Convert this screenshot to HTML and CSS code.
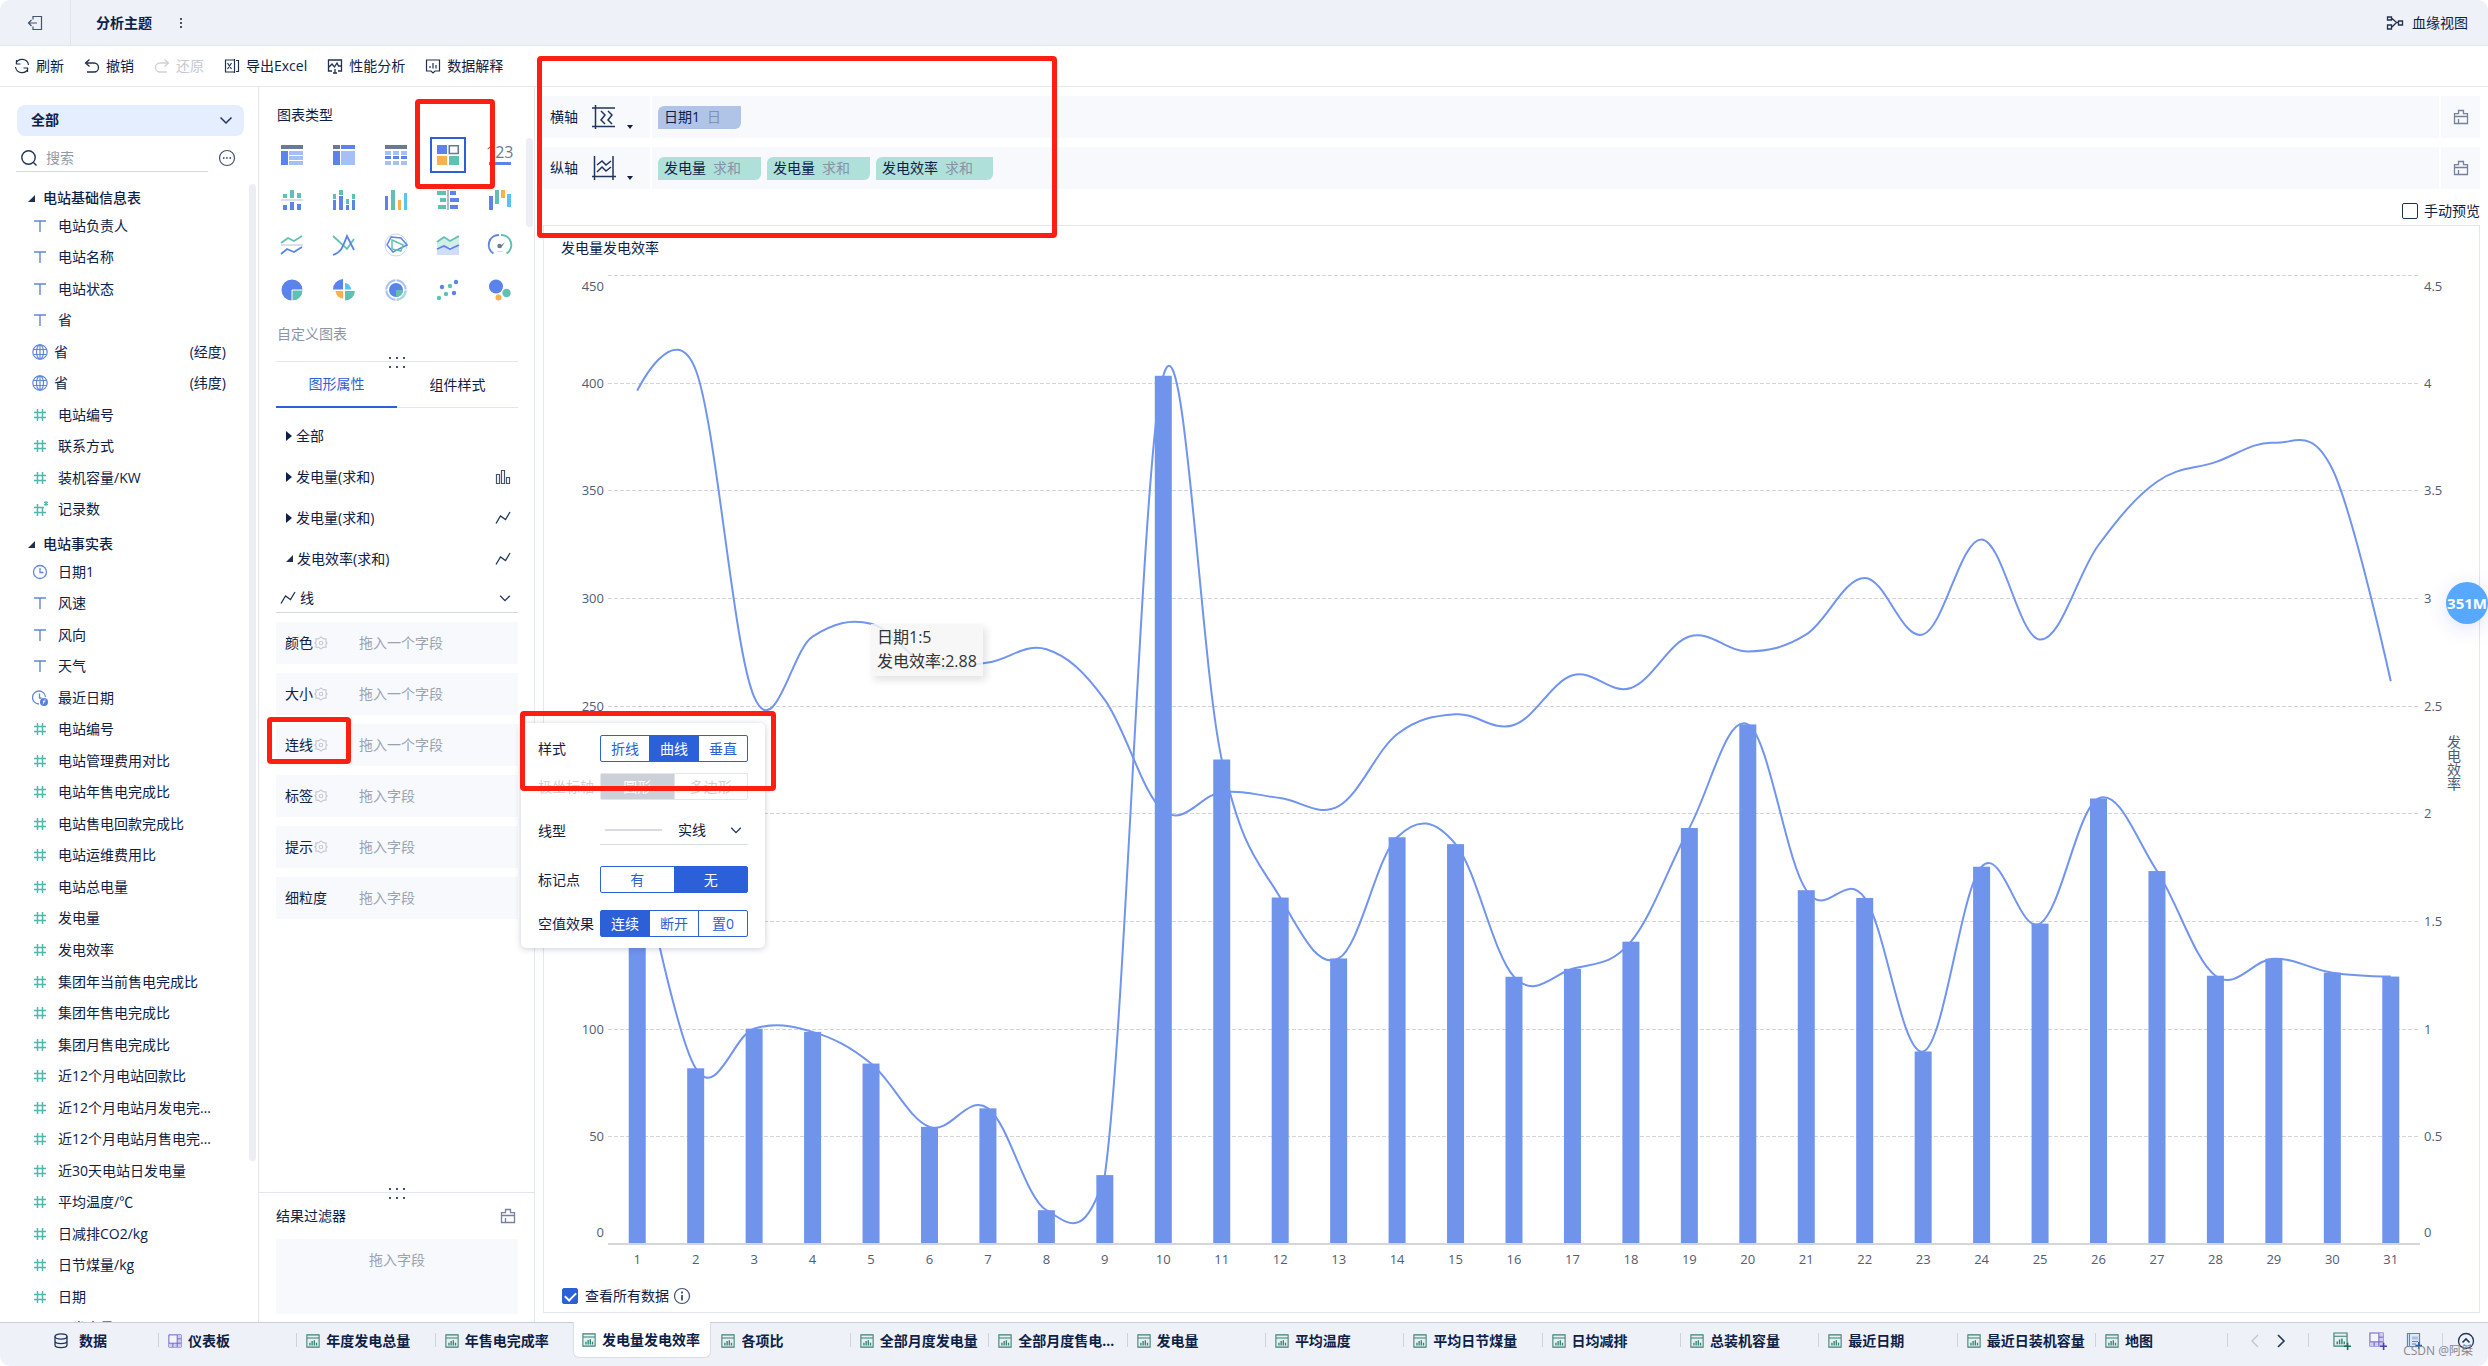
FILE: index.html
```html
<!DOCTYPE html>
<html lang="zh-CN">
<head>
<meta charset="utf-8">
<title>分析主题</title>
<link rel="stylesheet" href="styles.css">
</head>
<body>
<svg class="defs" aria-hidden="true">
  <symbol id="i-text" viewBox="0 0 16 16"><path d="M2 3h12M8 3v11" fill="none" stroke="#6286d8" stroke-width="1.4"/></symbol>
  <symbol id="i-num" viewBox="0 0 16 16"><path d="M2 5.5h12M2 10.5h12M5.500 2v12M10.500 2v12" fill="none" stroke="#4db8ac" stroke-width="1.500"/></symbol>
  <symbol id="i-numstar" viewBox="0 0 16 16"><path d="M2 6.500h10M2 11.500h12M5.500 3v12M10.500 6v9" fill="none" stroke="#4db8ac" stroke-width="1.5"/><path d="M14 0v5M12 1l4 3M16 1l-4 3" stroke="#4db8ac" stroke-width="1.100"/></symbol>
  <symbol id="i-globe" viewBox="0 0 16 16"><g fill="none" stroke="#6286d8" stroke-width="1.2"><circle cx="8" cy="8" r="7.200"/><ellipse cx="8" cy="8" rx="3.500" ry="7.200"/><path d="M1.500 5.500h13M1.500 10.500h13M8 1v14"/></g></symbol>
  <symbol id="i-clock" viewBox="0 0 16 16"><g fill="none" stroke="#6286d8" stroke-width="1.3"><circle cx="8" cy="8" r="6.500"/><path d="M8 4v4.500h3.500"/></g></symbol>
  <symbol id="i-clockf" viewBox="0 0 16 16"><g fill="none" stroke="#6286d8" stroke-width="1.3"><path d="M7 14A6.500 6.500 0 1 1 13.500 7"/><path d="M7.500 3.500v4.500h2"/></g><circle cx="12" cy="12" r="4" fill="#5580d8"/><path d="M13.500 9.800c-1.500-.4-1.500 1-1.700 2.200s-.3 1.800-1 2M10.800 11.700h2.500" fill="none" stroke="#fff" stroke-width=".9"/></symbol>
  <symbol id="i-chev" viewBox="0 0 16 16"><path d="M2.500 5.500L8 11l5.500-5.500" fill="none" stroke="#20355c" stroke-width="1.5"/></symbol>
  <symbol id="i-gear" viewBox="0 0 16 16"><g fill="none" stroke="#c6cad3" stroke-width="1.3"><path d="M5.500 3L8 1l2.500 2 3.500.5-.5 3L15 8l-1.500 1.500.5 3-3.500.5L8 15l-2.500-2-3.500-.5.5-3L1 8l1.500-1.500-.5-3z"/><circle cx="8" cy="8" r="2"/></g></symbol>
  <symbol id="i-brush" viewBox="0 0 16 16"><path d="M1.500 7.500V4.700h4V1.500h5v3.200h4v2.800zM1.500 7.500v7h13v-7M5.500 10v4.500" fill="none" stroke="#76819a" stroke-width="1.3"/></symbol>
  <symbol id="i-line" viewBox="0 0 16 16"><path d="M1 13.500L5.500 6l5 3.500L15 2" fill="none" stroke="#20355c" stroke-width="1.3"/></symbol>
  <symbol id="i-bars" viewBox="0 0 16 16"><path d="M1.500 5.500h3v9h-3zM6.500 1.500h3v13h-3zM11.500 8.500h3v6h-3z" fill="none" stroke="#42526f" stroke-width="1.200"/></symbol>
  <symbol id="i-chart" viewBox="0 0 16 16"><path d="M1 1h14v14H1zM1 4.500h14" fill="#e4f1ee" stroke="#3c7f76" stroke-width="1.200"/><path d="M4.500 10v3M7 8v5M9.500 7v6M12 10v3" stroke="#2f8277" stroke-width="1.500"/></symbol>
  <symbol id="i-dash" viewBox="0 0 16 16"><path d="M1 1h14v14H1z" fill="#f4f3fd" stroke="#6a5fc0" stroke-width="1.100"/><path d="M10.500 1h4.500v14H1v-4.500h9.500z" fill="#cfcaf3"/><path d="M10.500 1v14M1 10.500h14M10.500 5.500h4.500M5.500 10.500v4.500" fill="none" stroke="#6a5fc0" stroke-width="1"/></symbol>
  <symbol id="i-plus" viewBox="0 0 16 16"><path d="M13 9.500v6.500M9.700 12.700h6.300" stroke="currentColor" stroke-width="1.400"/></symbol>
</svg>

<header class="topbar">
  <button class="back" aria-label="返回"><svg width="16" height="16" viewBox="0 0 16 16"><path d="M6 4.500V1.500h8.500v13H6v-3M10 8H1.500M4.500 5L1.500 8l3 3" fill="none" stroke="#42526f" stroke-width="1.200"/></svg></button>
  <h1 class="title">分析主题</h1>
  <button class="more" aria-label="更多"><svg width="4" height="12" viewBox="0 0 4 12"><path d="M1 1h2v2H1zM1 5h2v2H1zM1 9h2v2H1z" fill="#42526f"/></svg></button>
  <button class="lineage"><svg width="18" height="16" viewBox="0 0 18 16"><path d="M1.500 2h4v3h-4zM1.500 10h4v4h-4zM12.500 6h4v4h-4zM6 3.500l4 3.500M6 12l4-4M10 7.500h2" fill="none" stroke="#20304f" stroke-width="1.300"/></svg>血缘视图</button>
</header>

<nav class="toolbar">
  <button><svg width="16" height="16" viewBox="0 0 16 16"><path d="M14.500 7A6.500 6.500 0 0 0 2 5.500M2.500 2v4h4M1.500 9A6.500 6.500 0 0 0 14 10.500M13.500 14v-4h-4" fill="none" stroke="#20304f" stroke-width="1.200"/></svg>刷新</button>
  <button><svg width="16" height="16" viewBox="0 0 16 16"><path d="M5.500 1.500L1.500 5l4 3.500M2 5h8a4.500 4.500 0 0 1 0 9H3" fill="none" stroke="#20304f" stroke-width="1.300"/></svg>撤销</button>
  <button disabled><svg width="16" height="16" viewBox="0 0 16 16"><path d="M10.500 1.500l4 3.500-4 3.500M14 5H6a4.500 4.500 0 0 0 0 9h7" fill="none" stroke="#cdd1d9" stroke-width="1.300"/></svg>还原</button>
  <button><svg width="16" height="16" viewBox="0 0 16 16"><path d="M10 2H1.500v12H10M12 2.500h2.500v11H12M3.500 5l4 6M7.500 5l-4 6M10.500 1v14" fill="none" stroke="#20304f" stroke-width="1.200"/></svg>导出Excel</button>
  <button><svg width="16" height="16" viewBox="0 0 16 16"><path d="M5 13H1.500V2h13v11H11M2 9l3-3 2.500 3 2.500-4 1.500 3h3M8 11v4M6 15h4" fill="none" stroke="#20304f" stroke-width="1.300"/></svg>性能分析</button>
  <button><svg width="16" height="16" viewBox="0 0 16 16"><path d="M6 13H1.500V2h13v11H10l-2 2zM5 10V8M8 10.500V5M11 10.500V7" fill="none" stroke="#20304f" stroke-width="1.200"/></svg>数据解释</button>
</nav>

<main class="workspace">
  <aside class="fields">
    <div class="picker">
      <select aria-label="数据范围"><option>全部</option></select>
      <svg width="16" height="16"><use href="#i-chev"/></svg>
    </div>
    <div class="search-row">
      <div class="search">
        <svg width="18" height="18" viewBox="0 0 18 18"><circle cx="8.500" cy="8.500" r="6.700" fill="none" stroke="#20355c" stroke-width="1.400"/><path d="M13.500 13.500l3 3" stroke="#20355c" stroke-width="1.400"/></svg>
        <input type="text" placeholder="搜索" aria-label="搜索">
      </div>
      <button aria-label="更多选项"><svg width="18" height="18" viewBox="0 0 18 18"><circle cx="9" cy="9" r="7.500" fill="none" stroke="#42526f" stroke-width="1.200"/><path d="M5 8.300h1.500v1.500H5zM8.200 8.300h1.500v1.500H8.200zM11.500 8.300H13v1.500h-1.500z" fill="#20355c"/></svg></button>
    </div>
    <div class="tree-wrap">
      <div class="tree">
        <h2><i class="open"></i>电站基础信息表</h2>
        <ul class="base">
          <li><svg><use href="#i-text"/></svg><span>电站负责人</span></li>
          <li><svg><use href="#i-text"/></svg><span>电站名称</span></li>
          <li><svg><use href="#i-text"/></svg><span>电站状态</span></li>
          <li><svg><use href="#i-text"/></svg><span>省</span></li>
          <li class="geo"><svg><use href="#i-globe"/></svg><span>省</span><em>(经度)</em></li>
          <li class="geo"><svg><use href="#i-globe"/></svg><span>省</span><em>(纬度)</em></li>
          <li><svg><use href="#i-num"/></svg><span>电站编号</span></li>
          <li><svg><use href="#i-num"/></svg><span>联系方式</span></li>
          <li><svg><use href="#i-num"/></svg><span>装机容量/KW</span></li>
          <li><svg><use href="#i-numstar"/></svg><span>记录数</span></li>
        </ul>
        <h2><i class="open"></i>电站事实表</h2>
        <ul class="facts">
          <li><svg><use href="#i-clock"/></svg><span>日期1</span></li>
          <li><svg><use href="#i-text"/></svg><span>风速</span></li>
          <li><svg><use href="#i-text"/></svg><span>风向</span></li>
          <li><svg><use href="#i-text"/></svg><span>天气</span></li>
          <li><svg><use href="#i-clockf"/></svg><span>最近日期</span></li>
          <li><svg><use href="#i-num"/></svg><span>电站编号</span></li>
          <li><svg><use href="#i-num"/></svg><span>电站管理费用对比</span></li>
          <li><svg><use href="#i-num"/></svg><span>电站年售电完成比</span></li>
          <li><svg><use href="#i-num"/></svg><span>电站售电回款完成比</span></li>
          <li><svg><use href="#i-num"/></svg><span>电站运维费用比</span></li>
          <li><svg><use href="#i-num"/></svg><span>电站总电量</span></li>
          <li><svg><use href="#i-num"/></svg><span>发电量</span></li>
          <li><svg><use href="#i-num"/></svg><span>发电效率</span></li>
          <li><svg><use href="#i-num"/></svg><span>集团年当前售电完成比</span></li>
          <li><svg><use href="#i-num"/></svg><span>集团年售电完成比</span></li>
          <li><svg><use href="#i-num"/></svg><span>集团月售电完成比</span></li>
          <li><svg><use href="#i-num"/></svg><span>近12个月电站回款比</span></li>
          <li><svg><use href="#i-num"/></svg><span>近12个月电站月发电完…</span></li>
          <li><svg><use href="#i-num"/></svg><span>近12个月电站月售电完…</span></li>
          <li><svg><use href="#i-num"/></svg><span>近30天电站日发电量</span></li>
          <li><svg><use href="#i-num"/></svg><span>平均温度/℃</span></li>
          <li><svg><use href="#i-num"/></svg><span>日减排CO2/kg</span></li>
          <li><svg><use href="#i-num"/></svg><span>日节煤量/kg</span></li>
          <li><svg><use href="#i-num"/></svg><span>日期</span></li>
          <li><svg><use href="#i-num"/></svg><span>日发电量</span></li>
        </ul>
      </div>
      <div class="scroll"></div>
    </div>
  </aside>

  <section class="config">
    <div class="types">
      <h2>图表类型</h2>
      <div class="type-grid">
        <button aria-label="分组表"><svg viewBox="0 0 22 20"><path fill="#6b7a94" d="M0 0h22v4H0z"/><path fill="#5a84ec" d="M0 6h7v14H0z"/><path fill="#a4c0f6" d="M8 6h14v4H8zM8 11h14v4H8zM8 16h14v4H8z"/></svg></button>
        <button aria-label="交叉表"><svg viewBox="0 0 22 20"><path fill="#6b7a94" d="M0 0h7v4H0z"/><path fill="#5a84ec" d="M8 0h14v4H8zM0 6h7v14H0z"/><path fill="#a4c0f6" d="M8 6h14v14H8z"/></svg></button>
        <button aria-label="明细表"><svg viewBox="0 0 22 20"><path fill="#6b7a94" d="M0 0h22v4H0z"/><path fill="#a4c0f6" d="M0 6h6v4H0zM8 6h6v4H8zM16 6h6v4h-6zM0 16h6v4H0zM8 16h6v4H8zM16 16h6v4h-6z"/><path fill="#5a84ec" d="M0 11h6v3H0zM8 11h6v3H8zM16 11h6v3h-6z"/></svg></button>
        <button class="on" aria-label="自定义图表"><svg viewBox="0 0 22 20"><path fill="#5a84ec" d="M0 0h10v9H0z"/><path fill="#fff" stroke="#6b7a94" stroke-width="1.600" d="M12.300.8h9v7.700h-9z"/><path fill="#fbb04c" d="M0 11h10v9H0z"/><path fill="#62c0b2" d="M12 11h10v9H12z"/></svg></button>
        <button aria-label="指标卡"><svg viewBox="0 0 22 20"><text x="-3" y="13" font-size="16" fill="#6b7a94">123</text><path fill="#5a84ec" d="M0 17h22v3H0z"/></svg></button>
        <button aria-label="对比柱状图"><svg viewBox="0 0 22 20"><path fill="#62c0b2" d="M2 4h4v4H2zM9 0h4v8H9zM16 3h4v5h-4z"/><path fill="#b7bfcc" d="M0 9.500h22v1H0z"/><path fill="#5a84ec" d="M2 15h4v5H2zM9 12h4v8H9zM16 14h4v6h-4z"/></svg></button>
        <button aria-label="堆积柱状图"><svg viewBox="0 0 22 20"><path fill="#62c0b2" d="M0 4h3v5H0zM6 0h4v5H6zM13 9h3v5h-3zM19 4h3v5h-3z"/><path fill="#5a84ec" d="M0 10h3v10H0zM6 6h4v14H6zM13 15h3v5h-3zM19 10h3v10h-3z"/></svg></button>
        <button aria-label="多系列柱状图"><svg viewBox="0 0 22 20"><path fill="#5a84ec" d="M0 6h3v14H0z"/><path fill="#62c0b2" d="M6 0h4v20H6z"/><path fill="#fbb04c" d="M13 10h3v10h-3z"/><path fill="#57c4f5" d="M19 3h3v17h-3z"/></svg></button>
        <button aria-label="条形图"><svg viewBox="0 0 22 20"><path fill="#62c0b2" d="M0 1h9v4H0zM3 8h6v4H3zM1 15h8v4H1z"/><path fill="#6b7a94" d="M10.500 0h1v20h-1z"/><path fill="#5a84ec" d="M13 1h6v4h-6zM13 8h9v4h-9zM13 15h8v4h-8z"/></svg></button>
        <button aria-label="瀑布图"><svg viewBox="0 0 22 20"><path fill="#5a84ec" d="M0 6h4v14H0z"/><path fill="#62c0b2" d="M6 0h4v14H6z"/><path fill="#fbb04c" d="M12 0h4v8h-4z"/><path fill="#57c4f5" d="M18 4h4v13h-4z"/></svg></button>
        <button aria-label="折线图"><svg viewBox="0 0 22 20"><path fill="none" stroke="#62c0b2" stroke-width="1.800" d="M0 8l7-5 6 3 8-5"/><path fill="#b7bfcc" d="M0 9.500h22v1H0z"/><path fill="none" stroke="#5a84ec" stroke-width="1.800" d="M0 19l6-5 7 3 8-5"/></svg></button>
        <button aria-label="曲线图"><svg viewBox="0 0 22 20"><path fill="none" stroke="#62c0b2" stroke-width="1.800" d="M0 1l14 13 7-10"/><path fill="none" stroke="#5a84ec" stroke-width="1.800" d="M0 20c8-3 9-6 14-19l7 14"/></svg></button>
        <button aria-label="雷达图"><svg viewBox="0 0 22 20"><circle cx="11" cy="10" r="11" fill="none" stroke="#ccd6ea"/><path fill="none" stroke="#5a84ec" stroke-width="1.500" d="M6 2l10 1 6 7-14 7-6-7z"/><path fill="none" stroke="#62c0b2" stroke-width="1.500" d="M7 5l11 5-2 6-9-2z"/></svg></button>
        <button aria-label="面积图"><svg viewBox="0 0 22 20"><path fill="#d3ede8" d="M0 8l7-6 6 4 9-5v11H0z"/><path fill="none" stroke="#62c0b2" stroke-width="1.800" d="M0 7l7-5 6 4 9-5"/><path fill="#cfdcfa" d="M0 14l7-3 6 3 9-4v10H0z"/><path fill="none" stroke="#5a84ec" stroke-width="1.800" d="M0 14l7-3 6 3 9-4"/></svg></button>
        <button aria-label="仪表盘"><svg viewBox="0 0 22 20"><path fill="none" stroke="#5a84ec" stroke-width="2" d="M4.500 18.500A10 10 0 0 1 10 0"/><path fill="none" stroke="#62c0b2" stroke-width="2" d="M12 0a10 10 0 0 1 5.500 18.500"/><circle cx="10.500" cy="11" r="2.200" fill="#6b7a94"/><path d="M10 12l6-5-4 6z" fill="#6b7a94"/><path d="M8 16.500h6" stroke="#d5dae4"/></svg></button>
        <button aria-label="饼图"><svg viewBox="0 0 22 20"><circle cx="11" cy="10" r="10.500" fill="#5a84ec"/><path d="M11 10h11A10.500 10.500 0 0 1 11 21z" fill="#62c0b2" stroke="#fff"/></svg></button>
        <button aria-label="玫瑰图"><svg viewBox="0 0 22 20"><path fill="#5a84ec" d="M10 9.500V-1A10.500 10.500 0 0 0 0 9.500z"/><path fill="#57c4f5" d="M12 9.500h6A6.500 6.500 0 0 0 12 3z"/><path fill="#fbb04c" d="M10 11H2.500A8 8 0 0 0 10 18.500z"/><path fill="#62c0b2" d="M12 11h10a10 10 0 0 1-10 9.500z"/></svg></button>
        <button aria-label="多层饼图"><svg viewBox="0 0 22 20"><circle cx="11" cy="10" r="9.700" fill="none" stroke="#a4c0f6" stroke-width="2"/><path d="M20.700 11a9.700 9.700 0 0 1-9 8.700" fill="none" stroke="#a9dcd4" stroke-width="2"/><circle cx="11" cy="10" r="7" fill="#5a84ec"/><path d="M11 10h7a7 7 0 0 1-7 7z" fill="#62c0b2"/><path d="M11-1v3M11 18v3M0 10h3M19 10h3" stroke="#fff"/></svg></button>
        <button aria-label="散点图"><svg viewBox="0 0 22 20"><g fill="#5a84ec"><circle cx="19" cy="2" r="2.200"/><circle cx="5" cy="7" r="2.200"/><circle cx="17" cy="13" r="2.200"/></g><g fill="#62c0b2"><circle cx="13" cy="6" r="2.200"/><circle cx="9" cy="14" r="2.200"/><circle cx="2" cy="18" r="2.200"/></g></svg></button>
        <button aria-label="气泡图"><svg viewBox="0 0 22 20"><circle cx="7" cy="6.500" r="7" fill="#5a84ec"/><circle cx="17.500" cy="13" r="4.200" fill="#62c0b2"/><circle cx="9.500" cy="17.500" r="3" fill="#fbb04c"/></svg></button>
      </div>
      <p class="custom">自定义图表</p>
      <div class="scroll"></div>
    </div>
    <div class="split"><i class="dots"></i></div>
    <div class="tabs"><button class="on">图形属性</button><button>组件样式</button></div>
    <div class="attr"><i class="closed"></i>全部</div>
    <div class="attr"><i class="closed"></i>发电量(求和)<svg><use href="#i-bars"/></svg></div>
    <div class="attr"><i class="closed"></i>发电量(求和)<svg><use href="#i-line"/></svg></div>
    <div class="attr"><i class="open"></i>发电效率(求和)<svg><use href="#i-line"/></svg></div>
    <div class="shape">
      <svg width="16" height="16"><use href="#i-line"/></svg>
      <select aria-label="图形"><option>线</option></select>
      <svg width="14" height="14"><use href="#i-chev"/></svg>
    </div>
    <div class="drops">
      <div class="drop"><b>颜色</b><svg><use href="#i-gear"/></svg><span>拖入一个字段</span></div>
      <div class="drop"><b>大小</b><svg><use href="#i-gear"/></svg><span>拖入一个字段</span></div>
      <div class="drop"><b>连线</b><svg><use href="#i-gear"/></svg><span>拖入一个字段</span></div>
      <div class="drop"><b>标签</b><svg><use href="#i-gear"/></svg><span>拖入字段</span></div>
      <div class="drop"><b>提示</b><svg><use href="#i-gear"/></svg><span>拖入字段</span></div>
      <div class="drop"><b>细粒度</b><span>拖入字段</span></div>
    </div>
    <div class="filter">
      <i class="dots"></i>
      <h2>结果过滤器<svg width="16" height="16"><use href="#i-brush"/></svg></h2>
      <div class="filter-box">拖入字段</div>
    </div>
  </section>

  <section class="canvas">
    <div class="axis">
      <div class="axis-name">横轴<svg width="24" height="24" viewBox="0 0 24 24"><path d="M3.500 0v24M0 3h23M0 21.500h23M9 6l4 4-4 5 4 4M16 6l4 4-4 5 4 4" fill="none" stroke="#20355c" stroke-width="1.500"/></svg><i class="caret"></i></div>
      <div class="pills"><span class="pill dim">日期1<em>日</em></span></div>
      <button class="clear" aria-label="清空横轴"><svg width="16" height="16"><use href="#i-brush"/></svg></button>
    </div>
    <div class="axis">
      <div class="axis-name">纵轴<svg width="24" height="24" viewBox="0 0 24 24"><path d="M2.500 0v24M21 0v24M0 20.500h24M5 9l5-4 4 4 5-4M5 16l5-5 4 4 5-4" fill="none" stroke="#20355c" stroke-width="1.500"/></svg><i class="caret"></i></div>
      <div class="pills"><span class="pill">发电量<em>求和</em></span><span class="pill">发电量<em>求和</em></span><span class="pill">发电效率<em>求和</em></span></div>
      <button class="clear" aria-label="清空纵轴"><svg width="16" height="16"><use href="#i-brush"/></svg></button>
    </div>
    <label class="preview"><input type="checkbox">手动预览</label>
    <div class="card">
      <h2>发电量发电效率</h2>
      <div class="plot" id="plot">
        <svg id="chart" role="img" aria-label="发电量与发电效率组合图"></svg>
        <div class="axis-title">发电效率</div>
        <div class="tip" id="tip">日期1:5<br>发电效率:2.88</div>
      </div>
      <div class="card-foot">
        <label><input type="checkbox" checked>查看所有数据</label>
        <svg width="18" height="18" viewBox="0 0 18 18"><circle cx="9" cy="9" r="7.500" fill="none" stroke="#42526f" stroke-width="1.200"/><path d="M9 4.500v2M9 8v5.500" stroke="#20355c" stroke-width="1.600"/></svg>
      </div>
    </div>
  </section>
</main>

<footer class="sheets">
  <button class="data"><svg width="14" height="16" viewBox="0 0 14 16"><g fill="none" stroke="#20355c" stroke-width="1.300"><ellipse cx="7" cy="3.500" rx="6" ry="2.600"/><path d="M1 3.500V12c0 3.500 12 3.500 12 0V3.500M1 8c0 3.500 12 3.500 12 0"/></g></svg>数据</button>
  <div class="sheet-list">
    <button><svg><use href="#i-dash"/></svg>仪表板</button>
    <button><svg><use href="#i-chart"/></svg>年度发电总量</button>
    <button><svg><use href="#i-chart"/></svg>年售电完成率</button>
    <button class="on"><svg><use href="#i-chart"/></svg>发电量发电效率</button>
    <button><svg><use href="#i-chart"/></svg>各项比</button>
    <button><svg><use href="#i-chart"/></svg>全部月度发电量</button>
    <button><svg><use href="#i-chart"/></svg>全部月度售电…</button>
    <button><svg><use href="#i-chart"/></svg>发电量</button>
    <button><svg><use href="#i-chart"/></svg>平均温度</button>
    <button><svg><use href="#i-chart"/></svg>平均日节煤量</button>
    <button><svg><use href="#i-chart"/></svg>日均减排</button>
    <button><svg><use href="#i-chart"/></svg>总装机容量</button>
    <button><svg><use href="#i-chart"/></svg>最近日期</button>
    <button><svg><use href="#i-chart"/></svg>最近日装机容量</button>
    <button><svg><use href="#i-chart"/></svg>地图</button>
  </div>
  <div class="pager">
    <button aria-label="上一页"><svg width="10" height="16" viewBox="0 0 10 16"><path d="M8 2L2 8l6 6" fill="none" stroke="#c3c7d0" stroke-width="1.400"/></svg></button>
    <button aria-label="下一页"><svg width="10" height="16" viewBox="0 0 10 16"><path d="M2 2l6 6-6 6" fill="none" stroke="#20355c" stroke-width="1.600"/></svg></button>
  </div>
  <div class="adders">
    <button class="g" aria-label="新建组件"><svg width="18" height="18"><use href="#i-chart" width="15" height="15"/><use href="#i-plus"/></svg></button>
    <button class="v" aria-label="新建仪表板"><svg width="18" height="18"><use href="#i-dash" width="15" height="15"/><use href="#i-plus"/></svg></button>
    <button class="b" aria-label="新建文档"><svg width="18" height="18" viewBox="0 0 18 18"><path d="M2.500 1.500h12v13h-12z" fill="#dfe8f8" stroke="#5b84c8" stroke-width="1.200"/><path d="M7 4.500h6v3H7z" fill="#a9c1ea"/><path d="M4.500 1.500v13M7 9.500h6M7 12h4" stroke="#5b84c8"/><use href="#i-plus" width="17" height="17"/></svg></button>
  </div>
  <div class="up"><button aria-label="展开"><svg width="18" height="18" viewBox="0 0 18 18"><circle cx="9" cy="9" r="7.500" fill="none" stroke="#20355c" stroke-width="1.300"/><path d="M5.500 10.500L9 7l3.500 3.500" fill="none" stroke="#20355c" stroke-width="1.600"/></svg></button></div>
</footer>

<form class="popup">
  <fieldset><legend>样式</legend>
    <div class="seg"><label><input type="radio" name="style">折线</label><label><input type="radio" name="style" checked>曲线</label><label><input type="radio" name="style">垂直</label></div></fieldset>
  <fieldset disabled><legend>极坐标轴</legend>
    <div class="seg"><label><input type="radio" name="polar" checked>圆形</label><label><input type="radio" name="polar">多边形</label></div></fieldset>
  <div class="kind"><label for="kind">线型</label>
    <div class="kind-box"><i></i><select id="kind"><option>实线</option></select><svg width="14" height="14"><use href="#i-chev"/></svg></div></div>
  <fieldset><legend>标记点</legend>
    <div class="seg"><label><input type="radio" name="mark">有</label><label><input type="radio" name="mark" checked>无</label></div></fieldset>
  <fieldset><legend>空值效果</legend>
    <div class="seg"><label><input type="radio" name="empty" checked>连续</label><label><input type="radio" name="empty">断开</label><label><input type="radio" name="empty">置0</label></div></fieldset>
</form>

<div class="mark mark-axes"></div>
<div class="mark mark-type"></div>
<div class="mark mark-link"></div>
<div class="mark mark-style"></div>
<div class="badge">351M</div>
<div class="credit">CSDN @阿桀</div>
<script src="chart.js"></script>
</body>
</html>
```
FILE: styles.css
```css
* { box-sizing: border-box; }
body {
  margin: 0;
  height: 100vh;
  display: flex;
  flex-direction: column;
  position: relative;
  overflow: hidden;
  background: #fff;
  color: #0d2147;
  font: 14px/20px "Open Sans", "Noto Sans CJK SC", sans-serif;
}
.defs { position: absolute; width: 0; height: 0; }
button, input, select {
  font: inherit;
  color: inherit;
  background: none;
  border: 0;
  padding: 0;
  margin: 0;
  outline: 0;
}
select { appearance: none; }
h1, h2, p, ul, fieldset, legend { margin: 0; padding: 0; border: 0; }
h1, h2 { font-size: 14px; font-weight: 400; }
ul { list-style: none; }
em { font-style: normal; }
svg { flex: none; display: block; }

.topbar {
  flex: none;
  height: 46px;
  display: flex;
  align-items: center;
  background: #eef1f7;
  border-bottom: 1px solid #e2e5ee;
  border-radius: 10px 10px 0 0;
}
.back {
  width: 71px;
  height: 45px;
  display: grid;
  place-items: center;
  border-right: 1px solid #dfe3ec;
}
.title { margin-left: 25px; font-weight: 700; }
.more { margin-left: 27px; }
.lineage { margin-left: auto; margin-right: 20px; display: flex; align-items: center; gap: 8px; }

.toolbar {
  flex: none;
  height: 41px;
  display: flex;
  align-items: center;
  gap: 20px;
  padding-left: 14px;
  border-bottom: 1px solid #e6e8f0;
}
.toolbar button { display: flex; align-items: center; gap: 6px; }
.toolbar button:disabled { color: #c5c9d2; }

.workspace { flex: 1; min-height: 0; display: flex; }

.fields {
  flex: none;
  width: 259px;
  border-right: 1px solid #e6e8f0;
  display: flex;
  flex-direction: column;
  padding-top: 18px;
}
.picker {
  margin: 0 14px 0 17px;
  height: 31px;
  display: flex;
  align-items: center;
  padding: 0 10px 2px 14px;
  background: #e5eeff;
  border-radius: 8px;
}
.picker select { flex: 1; font-weight: 700; }
.search-row { display: flex; align-items: center; margin: 8px 22px 0 16px; height: 28px; gap: 10px; }
.search {
  flex: 1;
  min-width: 0;
  display: flex;
  align-items: center;
  gap: 8px;
  padding-left: 4px;
  height: 28px;
  border-bottom: 1px solid #d3d7e0;
}
.search input { width: 100%; }
.search input::placeholder { color: #9199a9; opacity: 1; }
.tree-wrap { flex: 1; min-height: 0; display: flex; margin-top: 12px; }
.tree { flex: 1; overflow: hidden; }
.tree h2 {
  height: 26px;
  display: flex;
  align-items: center;
  gap: 8px;
  padding: 2px 0 0 28px;
  font-weight: 500;
}
.tree h2:not(:first-child) { margin-top: 5px; }
.tree ul { display: grid; grid-auto-rows: 1fr; }
.base { height: 315px; }
.facts { height: 788px; }
.tree li { display: flex; align-items: center; gap: 10px; padding: 0 23px 0 32px; white-space: nowrap; }
.tree li svg { width: 16px; height: 16px; }
.tree .geo { gap: 6px; }
.tree em { margin-left: auto; }
.fields .scroll { flex: none; width: 7px; height: 977px; margin-right: 2px; border-radius: 4px; background: #eceef3; }
.open { border: solid transparent; border-width: 0 0 7px 7px; border-bottom-color: #20304f; }
.closed { border: solid transparent; border-width: 5px 0 5px 6px; border-left-color: #0d2147; }

.config {
  flex: none;
  width: 276px;
  border-right: 1px solid #e6e8f0;
  display: flex;
  flex-direction: column;
}
.types { position: relative; height: 275px; padding-top: 18px; }
.types h2 { padding-left: 18px; }
.type-grid {
  display: grid;
  grid-template-columns: repeat(5, 52px);
  grid-auto-rows: 45px;
  margin: 7px 0 0 7px;
  place-items: center;
}
.type-grid button { width: 36px; height: 36px; display: grid; place-items: center; }
.type-grid .on { border: 2px solid #2b60d9; }
.type-grid svg { width: 22px; height: 20px; overflow: visible; }
.custom { padding: 12px 0 0 18px; color: #8d95a5; }
.types .scroll { position: absolute; right: 1px; top: 51px; width: 7px; height: 89px; border-radius: 4px; background: #eceef3; }
.split { position: relative; flex: none; margin: -1px 16px 0 17px; border-top: 1px solid #e2e5ee; }
.dots {
  position: absolute;
  left: 50%;
  top: -5px;
  width: 16px;
  height: 11px;
  margin-left: -8px;
  background: radial-gradient(circle at 1px 1px, #42526f 1px, transparent 1px) 0 0 / 7px 9px;
}
.tabs { flex: none; display: flex; margin: 0 16px 7px 17px; height: 46px; }
.tabs button { flex: 1; border-bottom: 1px solid #e2e5ee; }
.tabs .on { color: #2b60d9; border-bottom: 2px solid #2b60d9; }
.attr {
  flex: none;
  height: 41px;
  display: flex;
  align-items: center;
  gap: 4px;
  padding: 0 23px 0 27px;
}
.attr svg { width: 16px; height: 16px; margin-left: auto; }
.shape {
  flex: none;
  display: flex;
  align-items: center;
  gap: 4px;
  height: 34px;
  margin: 0 16px 0 17px;
  padding: 4px 6px 0 4px;
  border-bottom: 1px solid #d3d7e0;
}
.shape select { flex: 1; }
.drops { flex: 1; display: flex; flex-direction: column; gap: 9px; margin: 9px 16px 0 17px; }
.drop { flex: none; height: 42px; display: flex; align-items: center; padding-left: 9px; background: #f7f9fd; position: relative; }
.drop b { font-weight: 400; }
.drop svg { width: 14px; height: 14px; margin-left: 1px; }
.drop span { position: absolute; left: 83px; color: #9aa2b1; }
.filter { position: relative; flex: none; height: 130px; padding: 13px 16px 0 17px; border-top: 1px solid #e2e5ee; }
.filter h2 { display: flex; align-items: center; justify-content: space-between; padding-right: 2px; }
.filter-box { margin-top: 13px; height: 75px; padding-top: 11px; text-align: center; color: #9aa2b1; background: #f7f9fd; }

.canvas { flex: 1; min-width: 0; display: flex; flex-direction: column; padding: 9px 8px 9px; }
.axis { flex: none; display: flex; height: 42px; margin-bottom: 9px; gap: 2px; }
.axis > * { background: #f7f9fd; }
.axis-name { flex: none; width: 107px; display: flex; align-items: center; padding-left: 7px; }
.axis-name svg { margin-left: 14px; }
.caret { border: solid transparent; border-width: 4px 3px 0; border-top-color: #0d2147; margin: 20px 0 0 11px; }
.pills { flex: 1; display: flex; align-items: center; gap: 6px; padding-left: 6px; }
.pill { height: 23px; padding: 0 20px 0 6px; display: flex; align-items: center; gap: 7px; background: #afe0da; border-radius: 6px 0 6px 0; }
.pill.dim { background: #b0c4e8; }
.pill em { color: #8792a6; }
.clear { width: 39px; display: grid; place-items: center; }
.preview { align-self: flex-end; display: flex; align-items: center; gap: 6px; height: 28px; margin-bottom: -1px; padding-bottom: 3px; }
input[type="checkbox"] {
  appearance: none;
  width: 16px;
  height: 16px;
  border: 1px solid #20304f;
  border-radius: 2px;
  display: grid;
  place-items: center;
}
input[type="checkbox"]:checked { background: #2b60d9; border-color: #2b60d9; }
input[type="checkbox"]:checked::before {
  content: "";
  width: 5px;
  height: 9px;
  margin-top: -2px;
  border: solid #fff;
  border-width: 0 2px 2px 0;
  transform: rotate(45deg);
}
.card { flex: 1; min-height: 0; display: flex; flex-direction: column; border: 1px solid #e3e6ee; }
.card h2 { flex: none; height: 44px; padding: 12px 0 0 17px; }
.plot { flex: 1; min-height: 0; position: relative; }
.plot svg { position: absolute; inset: 0; width: 100%; height: 100%; font-size: 13px; }
.grid { stroke: #d2d4d8; stroke-dasharray: 4 2; }
.base-line { stroke: #d4d6da; stroke-width: 2; }
.bar { fill: #7093ec; }
.curve { fill: none; stroke: #7094f0; stroke-width: 2; }
.tick { fill: #515c70; }
.axis-title { position: absolute; right: 17px; top: 46%; width: 16px; line-height: 14px; text-align: center; word-break: break-all; color: #515c70; }
.tip {
  position: absolute;
  padding: 1px 6px 3px;
  font-size: 16px;
  line-height: 24px;
  white-space: nowrap;
  color: #333;
  background: rgba(246, 246, 246, .85);
  box-shadow: 3px 4px 8px rgba(0, 0, 0, .12);
}
.card-foot { flex: none; height: 32px; display: flex; align-items: center; gap: 4px; padding-left: 18px; }
.card-foot label { display: flex; align-items: center; gap: 7px; }

.sheets {
  flex: none;
  height: 44px;
  display: flex;
  background: #eef1f7;
  border-top: 1px solid #c9cedb;
  border-radius: 0 0 10px 10px;
}
.sheets button { display: flex; align-items: center; height: 35px; font-weight: 700; }
.sheets .data { width: 158px; gap: 11px; padding-left: 54px; }
.sheet-list { flex: 1; min-width: 0; display: flex; }
.sheet-list button { flex: 1 1 0; min-width: 0; gap: 6px; padding-left: 10px; position: relative; white-space: nowrap; }
.sheet-list button:last-child { flex: 0 0 132px; }
.sheet-list svg { width: 14px; height: 14px; }
.sheet-list button:not(.on, .on + button)::before, .pager::before, .adders::before, .up::before {
  content: "";
  position: absolute;
  left: 0;
  top: 10px;
  width: 1px;
  height: 14px;
  background: #cfd3dc;
}
.sheet-list .on { background: #fff; border: 1px solid #d9dde7; border-top: 0; border-radius: 0 0 6px 6px; margin-top: -1px; height: 36px; padding-left: 8px; }
.pager, .adders, .up { position: relative; flex: none; display: flex; }
.pager { width: 81px; padding-left: 23px; gap: 16px; }
.adders { width: 134px; padding-left: 25px; gap: 18px; }
.g { color: #1f6b60; }
.v { color: #4b3db0; }
.b { color: #2a5bb0; }
.up { width: 46px; padding-left: 15px; }

.popup {
  position: absolute;
  left: 521px;
  top: 723px;
  width: 244px;
  display: grid;
  grid-template-rows: 38px 42px 51px 44px 27px;
  align-items: start;
  padding: 12px 17px 11px;
  background: #fff;
  border-radius: 5px;
  box-shadow: 0 1px 6px rgba(40, 60, 100, .25);
}
.popup fieldset, .kind { display: flex; align-items: center; min-width: 0; }
.popup legend, .kind > label { float: left; width: 62px; line-height: 27px; }
.seg { flex: 1; display: flex; height: 27px; border: 1px solid #2b60d9; border-radius: 2px; color: #2b60d9; background: #fff; }
.seg label { flex: 1; display: grid; place-items: center; }
.seg label + label { border-left: 1px solid #2b60d9; }
.seg input { position: absolute; opacity: 0; }
.seg label:has(:checked) { background: #2b60d9; color: #fff; }
.popup fieldset:disabled { color: #ccd0d8; }
.popup fieldset:disabled .seg { border-color: #e3e5ea; color: #ccd0d8; }
.popup fieldset:disabled label { border-color: #e3e5ea; }
.popup fieldset:disabled label:has(:checked) { background: #ccd0d8; color: #fff; }
.kind-box { flex: 1; display: flex; align-items: center; height: 30px; padding: 0 5px; border-bottom: 1px solid #d9dce4; }
.kind-box i { width: 57px; height: 2px; background: #d9dce4; margin-right: 16px; }
.kind-box select { flex: 1; }

.mark { position: absolute; border: 5px solid #ff1f12; border-radius: 4px; pointer-events: none; }
.mark-axes { left: 537px; top: 56px; width: 520px; height: 182px; }
.mark-type { left: 415px; top: 99px; width: 80px; height: 90px; }
.mark-link { left: 267px; top: 717px; width: 84px; height: 47px; }
.mark-style { left: 520px; top: 711px; width: 256px; height: 80px; }
.badge {
  position: absolute;
  right: 0;
  top: 582px;
  width: 42px;
  height: 42px;
  border-radius: 50%;
  background: #57a8ff;
  color: #fff;
  font-size: 15px;
  font-weight: 700;
  line-height: 42px;
  text-align: center;
  box-shadow: 0 4px 20px rgba(90, 90, 220, .18);
}
.credit { position: absolute; right: 15px; bottom: 5px; font-size: 12px; color: #84888f; }
```
FILE: chart.js
```js
const power = [187.1, 81.6, 100, 98.5, 83.8, 54.4, 63, 15.7, 32, 403.2, 225, 160.9, 132.6, 188.9, 185.7, 124.1,
  127.8, 140.4, 193.2, 241.3, 164.3, 160.7, 89.4, 175.2, 148.8, 206.9, 173.2, 124.6, 132.5, 126, 124.2];
const efficiency = [3.963, 4.06, 2.541, 2.821, 2.88, 2.685, 2.7, 2.762, 2.527, 2.012, 2.098, 2.071, 2.034, 2.367,
  2.46, 2.41, 2.641, 2.582, 2.821, 2.752, 2.831, 3.093, 2.831, 3.272, 2.807, 3.246, 3.54, 3.631, 3.721, 3.599, 2.613];

const plot = document.getElementById('plot');
const chart = document.getElementById('chart');
const tip = document.getElementById('tip');
const pad = { left: 64, right: 59, top: 5, bottom: 36 };
const tension = 0.18;

function draw() {
  const w = plot.clientWidth;
  const h = plot.clientHeight;
  const x0 = pad.left;
  const x1 = w - pad.right;
  const y0 = h - pad.bottom;
  const step = (x1 - x0) / power.length;
  const x = i => x0 + step * (i + 0.5);
  const y = (v, max) => y0 - v / max * (y0 - pad.top);
  let out = '';

  for (let i = 0; i <= 9; i++) {
    const gy = Math.round(y(i, 9)) + 0.5;
    if (i) out += `<line class="grid" x1="${x0}" x2="${x1}" y1="${gy}" y2="${gy}"/>`;
    // the end labels are kept inside the plot area
    const ty = gy + (i === 0 ? -8 : i === 9 ? 15 : 4);
    out += `<text class="tick" x="${x0 - 4}" y="${ty}" text-anchor="end">${i * 50}</text>`;
    out += `<text class="tick" x="${x1 + 4}" y="${ty}">${i / 2}</text>`;
  }
  power.forEach((v, i) => {
    const by = y(v, 450);
    out += `<rect class="bar" x="${x(i) - 8.5}" y="${by}" width="17" height="${y0 - by}"/>`;
    out += `<text class="tick" x="${x(i)}" y="${y0 + 20}" text-anchor="middle">${i + 1}</text>`;
  });
  out += `<line class="base-line" x1="${x0}" x2="${x1}" y1="${y0}" y2="${y0}"/>`;

  [[power, 450], [efficiency, 4.5]].forEach(([data, max]) => {
    const p = data.map((v, i) => [x(i), y(v, max)]);
    const clamp = v => Math.min(y0, Math.max(pad.top, v));
    const slope = i => (i === 0 || i === p.length - 1) ? [0, 0]
      : [(p[i + 1][0] - p[i - 1][0]) * tension, (p[i + 1][1] - p[i - 1][1]) * tension];
    let d = `M${p[0]}`;
    for (let i = 1; i < p.length; i++) {
      const a = slope(i - 1);
      const b = slope(i);
      d += `C${p[i - 1][0] + a[0]},${clamp(p[i - 1][1] + a[1])} ${p[i][0] - b[0]},${clamp(p[i][1] - b[1])} ${p[i]}`;
    }
    out += `<path class="curve" d="${d}"/>`;
  });
  chart.innerHTML = out;
  tip.style.left = `${Math.round(x(4))}px`;
  tip.style.top = `${Math.round(y(2.88, 4.5))}px`;
}

draw();
window.addEventListener('resize', draw);
```
